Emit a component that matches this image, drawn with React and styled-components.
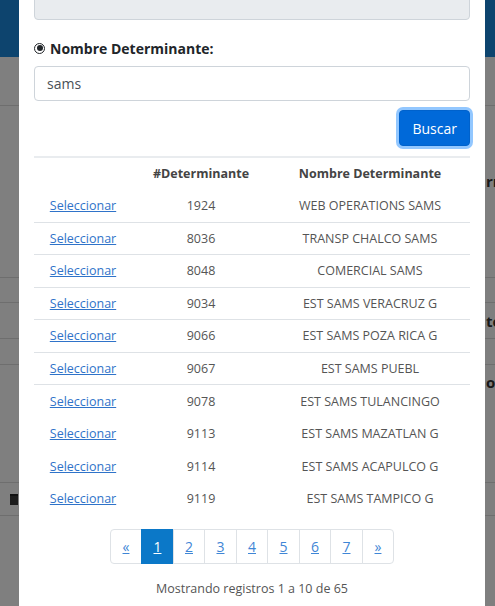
import React from "react";
import styled, { createGlobalStyle } from "styled-components";

const GlobalStyle = createGlobalStyle`
  html, body {
    margin: 0;
    padding: 0;
    height: 100%;
    overflow: hidden;
  }
  body {
    font-family: "Open Sans", "Noto Sans", sans-serif;
    color: #495057;
    background: #fff;
  }
`;

const Page = styled.div`
  height: 606px;
  overflow: hidden;
  background: #fff;
`;

const TopBar = styled.div`
  height: 57px;
  background: #1a88dc;
`;

const PageRow = styled.div`
  display: grid;
  grid-template-columns: 486px 1fr;
  align-items: center;
  height: ${({ h }) => h}px;
  border-bottom: ${({ line }) => (line ? "1px solid #dcdcdc" : "none")};
  font-size: 15px;
  font-weight: 700;
  color: #333;
  white-space: nowrap;
`;

const CalendarMark = styled.span`
  display: inline-block;
  width: 8px;
  height: 9px;
  margin-left: 10px;
  background: #3a3a3a;
  border-top: 2px solid #222;
`;

const Backdrop = styled.div`
  position: fixed;
  inset: 0;
  background: rgba(0, 0, 0, 0.5);
`;

const ModalWrap = styled.div`
  position: fixed;
  inset: 0;
  overflow: hidden;
`;

const ModalContent = styled.div`
  width: 466px;
  margin: -33px 0 0 19px;
  background: #fff;
  padding: 15px 15px 30px;
  box-sizing: border-box;
  min-height: 700px;
`;

const Input = styled.div`
  box-sizing: border-box;
  height: ${({ h }) => h || 35}px;
  border: 1px solid #ced4da;
  border-radius: 4px;
  background: ${({ disabled }) => (disabled ? "#e9ecef" : "#fff")};
  padding: 0 12px;
  display: flex;
  align-items: center;
  font-size: 14px;
  color: #495057;
`;

const RadioLabel = styled.label`
  display: flex;
  align-items: center;
  gap: 5px;
  margin: 18px 0 8px;
  height: 20px;
  font-size: 14px;
  font-weight: 700;
  color: #212529;
`;

const Radio = styled.span`
  width: 11px;
  height: 11px;
  border-radius: 50%;
  border: 1px solid #212529;
  box-sizing: border-box;
  display: flex;
  align-items: center;
  justify-content: center;
  &::after {
    content: "";
    width: 6px;
    height: 6px;
    border-radius: 50%;
    background: #212529;
  }
`;

const ButtonRow = styled.div`
  display: flex;
  justify-content: flex-end;
  margin-top: 9px;
`;

const Button = styled.button`
  height: 36px;
  padding: 0 12px;
  border: 1px solid #0062cc;
  border-radius: 4px;
  background: #0069d9;
  color: #fff;
  font-family: inherit;
  font-size: 14px;
  box-shadow: 0 0 0 3px rgba(38, 143, 255, 0.5);
`;

const Table = styled.table`
  width: 100%;
  margin-top: 10px;
  border-collapse: collapse;
  border-top: 2px solid #e9ecef;
  font-size: 12.5px;
  color: #555;
  table-layout: fixed;
`;

const Th = styled.th`
  height: 30px;
  padding: 0 0 2px;
  font-weight: 700;
  color: #444;
  text-align: center;
  width: ${({ w }) => w}px;
`;

const Td = styled.td`
  height: ${({ line }) => (line ? 31.5 : 32.5)}px;
  padding: 0;
  text-align: center;
`;

const Tr = styled.tr`
  border-bottom: ${({ line }) => (line ? "1px solid #dee2e6" : "none")};
`;

const SelectLink = styled.a`
  color: #2f73c9;
  text-decoration: underline;
  cursor: pointer;
`;

const Pager = styled.ul`
  display: flex;
  justify-content: center;
  list-style: none;
  padding: 0;
  margin: 14px 0 0;
`;

const PageItem = styled.li`
  width: 32.5px;
  height: 35px;
  box-sizing: border-box;
  display: flex;
  align-items: center;
  justify-content: center;
  border: 1px solid #dee2e6;
  margin-left: -1px;
  background: ${({ active }) => (active ? "#0b78c8" : "#fff")};
  border-color: ${({ active }) => (active ? "#0b78c8" : "#dee2e6")};
  color: ${({ active }) => (active ? "#fff" : "#3f86d6")};
  text-decoration: underline;
  font-size: 14px;
  &:first-child {
    border-radius: 4px 0 0 4px;
    margin-left: 0;
  }
  &:last-child {
    border-radius: 0 4px 4px 0;
  }
`;

const Summary = styled.p`
  margin: 16px 0 0;
  text-align: center;
  font-size: 12.5px;
  color: #555;
`;

const rows = [
  ["1924", "WEB OPERATIONS SAMS"],
  ["8036", "TRANSP CHALCO SAMS"],
  ["8048", "COMERCIAL SAMS"],
  ["9034", "EST SAMS VERACRUZ G"],
  ["9066", "EST SAMS POZA RICA G"],
  ["9067", "EST SAMS PUEBL"],
  ["9078", "EST SAMS TULANCINGO"],
  ["9113", "EST SAMS MAZATLAN G"],
  ["9114", "EST SAMS ACAPULCO G"],
  ["9119", "EST SAMS TAMPICO G"],
];

const pages = ["«", "1", "2", "3", "4", "5", "6", "7", "»"];

export default function App() {
  return (
    <>
      <GlobalStyle />
      <Page>
        <TopBar />
        <PageRow h={48} line />
        <PageRow h={45} />
        <PageRow h={60}>
          <span />
          <span>rr</span>
        </PageRow>
        <PageRow h={66} line />
        <PageRow h={24} line />
        <PageRow h={35} line>
          <span />
          <span>te</span>
        </PageRow>
        <PageRow h={25} line />
        <PageRow h={34}>
          <span />
          <span>ot</span>
        </PageRow>
        <PageRow h={83} line />
        <PageRow h={32} line>
          <CalendarMark />
        </PageRow>
      </Page>
      <Backdrop />
      <ModalWrap>
        <ModalContent>
          <Input h={38} disabled />
          <RadioLabel>
            <Radio />
            Nombre Determinante:
          </RadioLabel>
          <Input>sams</Input>
          <ButtonRow>
            <Button>Buscar</Button>
          </ButtonRow>
          <Table>
            <thead>
              <tr>
                <Th w={98} />
                <Th w={138}>#Determinante</Th>
                <Th>Nombre Determinante</Th>
              </tr>
            </thead>
            <tbody>
              {rows.map(([num, name], i) => (
                <Tr key={num} line={i < 6}>
                  <Td line={i < 6}>
                    <SelectLink>Seleccionar</SelectLink>
                  </Td>
                  <Td line={i < 6}>{num}</Td>
                  <Td line={i < 6}>{name}</Td>
                </Tr>
              ))}
            </tbody>
          </Table>
          <Pager>
            {pages.map((p) => (
              <PageItem key={p} active={p === "1"}>
                {p}
              </PageItem>
            ))}
          </Pager>
          <Summary>Mostrando registros 1 a 10 de 65</Summary>
        </ModalContent>
      </ModalWrap>
    </>
  );
}
